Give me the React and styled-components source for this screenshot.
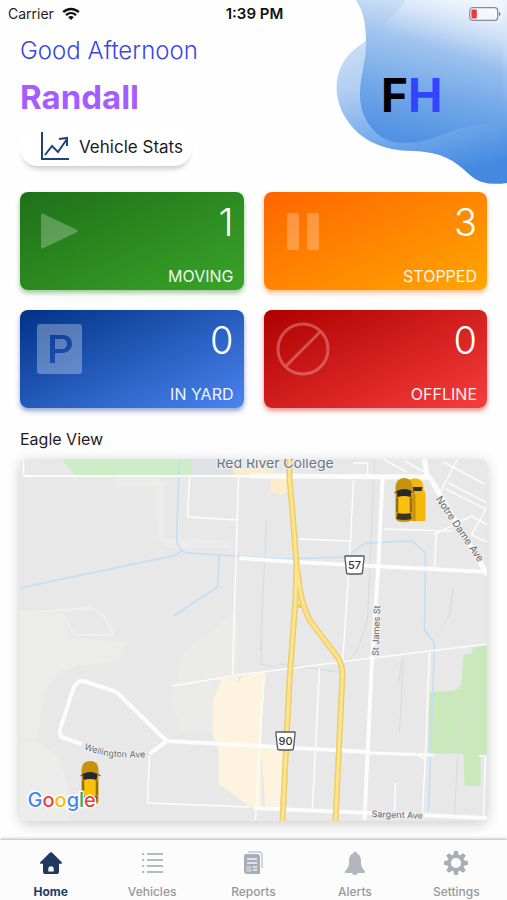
import React from "react";
import styled, { createGlobalStyle } from "styled-components";

const GlobalStyle = createGlobalStyle`
  *, *::before, *::after {
    box-sizing: border-box;
  }

  body {
    margin: 0;
    background-color: #fefefe;
    font-family: Inter, "Liberation Sans", sans-serif;
    color: #1c1c1e;
  }

  h1, h2, p {
    margin: 0;
    font-weight: 400;
  }
`;

const Screen = styled.div`
  position: relative;
  display: flex;
  flex-direction: column;
  min-height: 100vh;
  overflow: hidden;
`;

const StatusBar = styled.div`
  position: relative;
  z-index: 1;
  display: grid;
  grid-template-columns: 1fr auto 1fr;
  align-items: center;
  height: 28px;
  padding: 0 6px 0 8px;
  font-size: 14px;
  line-height: 20px;
`;

const Carrier = styled.span`
  display: flex;
  align-items: center;
  gap: 8px;
`;

const Clock = styled.time`
  font-size: 15px;
  font-weight: 600;
  color: #111;
`;

const Battery = styled.svg`
  justify-self: end;
`;

// Sits behind the header in the top right corner
const LogoArea = styled.div`
  position: absolute;
  top: 0;
  right: 0;
  width: 172px;
  height: 186px;
  padding: 66px 0 0 46px;

  svg {
    position: absolute;
    inset: 0;
  }
`;

const Logo = styled.div`
  position: relative;
  font-size: 46px;
  line-height: 58px;
  font-weight: 700;
  color: #000;

  span {
    color: #3344ff;
  }
`;

const Header = styled.header`
  position: relative;
  display: flex;
  flex-direction: column;
  align-items: flex-start;
  padding: 8px 20px 0;
`;

const Greeting = styled.p`
  font-size: 24px;
  line-height: 30px;
  font-weight: 300;
  color: #3a46e0;
`;

const UserName = styled.h1`
  margin-top: 11px;
  font-size: 33px;
  line-height: 40px;
  font-weight: 700;
  color: #a45eff;
`;

const StatsButton = styled.button`
  display: flex;
  align-items: center;
  gap: 8px;
  height: 38px;
  margin-top: 11px;
  padding: 0 9px 0 20px;
  border: 0;
  border-radius: 18px;
  background-color: #fff;
  box-shadow: 0 6px 5px -3px rgba(0, 0, 0, 0.2);
  font-family: inherit;
  font-size: 17px;
  color: #1c1c1e;
`;

const CardGrid = styled.section`
  display: grid;
  grid-template-columns: 1fr 1fr;
  gap: 20px;
  padding: 26px 20px 0;
`;

const Card = styled.article`
  display: grid;
  grid-template-columns: auto 1fr;
  grid-template-rows: 1fr auto;
  height: 98px;
  padding: 7px 10px 4px;
  border-radius: 8px;
  background: linear-gradient(155deg, ${(p) => p.$from}, ${(p) => p.$to});
  box-shadow: 0 3px 5px ${(p) => p.$shadow};
  color: #fff;

  svg {
    margin: 4px 0 0 1px;
  }
`;

const Count = styled.p`
  font-size: 38px;
  line-height: 46px;
  font-weight: 300;
  text-align: right;
`;

const CardLabel = styled.h2`
  grid-column: 1 / -1;
  font-size: 16px;
  line-height: 20px;
  text-align: right;
  opacity: 0.92;
`;

const MapSection = styled.section`
  flex: 1;
  display: flex;
  flex-direction: column;
  padding: 21px 20px 19px;
`;

const SectionTitle = styled.h2`
  margin-bottom: 10px;
  font-size: 16px;
  line-height: 20px;
`;

const MapFrame = styled.div`
  flex: 1;
  display: flex;
  min-height: 300px;
  border-radius: 5px;
  box-shadow: 0 3px 14px rgba(0, 0, 0, 0.2);
  overflow: hidden;

  svg {
    flex: 1;
    width: 100%;
  }
`;

const TabBar = styled.nav`
  position: relative;
  display: grid;
  grid-template-columns: repeat(5, 1fr);
  height: 60px;
  background-color: #fcfcfd;
  box-shadow: 0 -1px 3px rgba(0, 0, 0, 0.3);
`;

const Tab = styled.a`
  display: flex;
  flex-direction: column;
  align-items: center;
  gap: 9px;
  padding-top: 11px;
  font-size: 12px;
  line-height: 16px;
  font-weight: ${(p) => (p.$active ? 700 : 500)};
  color: ${(p) => (p.$active ? "#233a66" : "#97979b")};
  text-decoration: none;
`;

const WifiIcon = () => (
  <svg width="18" height="14" viewBox="0 0 18 14" fill="none" stroke="#111" strokeWidth="2.4" aria-hidden="true">
    <path d="M1.2 5.2C5.6 0.9 12.4 0.9 16.8 5.2" />
    <path d="M4 8.2C6.9 5.4 11.1 5.4 14 8.2" />
    <path d="M9 13L6.2 10.2C7.8 8.7 10.2 8.7 11.8 10.2Z" fill="#111" stroke="none" />
  </svg>
);

const BatteryIcon = () => (
  <Battery width="32" height="14" viewBox="0 0 32 14" role="img" aria-label="Battery low">
    <rect x="0.7" y="0.7" width="28" height="12.6" rx="3" fill="#ffffff" fillOpacity="0.5" stroke="#8b8b90" strokeWidth="1.2" />
    <rect x="2.4" y="2.4" width="5.4" height="9.2" rx="1" fill="#f23a35" />
    <path d="M30 5V9Q31.5 8.5 31.5 7Q31.5 5.5 30 5Z" fill="#77777c" />
  </Battery>
);

const Blob = () => (
  <svg width="172" height="186" viewBox="335 0 172 186" aria-hidden="true">
    <defs>
      <linearGradient id="blobBack" gradientUnits="userSpaceOnUse" x1="385" y1="10" x2="425" y2="180">
        <stop offset="0" stopColor="#d9e7f9" />
        <stop offset="0.4" stopColor="#b1cef3" />
        <stop offset="0.75" stopColor="#6fa6e9" />
        <stop offset="1" stopColor="#4489e1" />
      </linearGradient>
      <linearGradient id="blobFront" gradientUnits="userSpaceOnUse" x1="460" y1="0" x2="430" y2="144">
        <stop offset="0" stopColor="#dce9fa" />
        <stop offset="0.3" stopColor="#a6c7f0" />
        <stop offset="0.65" stopColor="#76aae9" />
        <stop offset="1" stopColor="#5092e3" />
      </linearGradient>
      <linearGradient id="blobShine" gradientUnits="userSpaceOnUse" x1="470" y1="60" x2="490" y2="0">
        <stop offset="0" stopColor="#fff" stopOpacity="0" />
        <stop offset="1" stopColor="#fff" stopOpacity="0.6" />
      </linearGradient>
    </defs>
    <path
      d="M406 0L507 0L507 183C492 185 480 184 470 175C455 161 443 152 413 151C383 151 360 140 347 120C331 96 333 66 356 48C375 36 390 15 406 0Z"
      fill="url(#blobBack)"
    />
    <path
      d="M356 0L507 0L503 10L503 126C487 123 470 125 455 130C436 137 420 144 400 143C378 142 360 120 360 95C360 74 367 61 366 38C365 21 364 13 356 0Z"
      fill="url(#blobFront)"
    />
    <path d="M406 0H507V100H366V41Q388 24 406 0Z" fill="url(#blobShine)" />
  </svg>
);

const StatsIcon = () => (
  <svg width="31" height="30" viewBox="0 0 31 30" fill="none" stroke="#1d437f" strokeWidth="2" aria-hidden="true">
    <path d="M2 0V27H29" />
    <path d="M5 23L12 14L18 20L27 7" />
    <path d="M19 7L27 6V14" />
  </svg>
);

const PlayIcon = () => (
  <svg width="56" height="56" viewBox="0 0 56 56" aria-hidden="true">
    <path d="M11.5 12V44L45 28Z" fill="#fff" stroke="#fff" strokeWidth="3" strokeLinejoin="round" opacity="0.25" />
  </svg>
);

const PauseIcon = () => (
  <svg width="56" height="56" viewBox="0 0 56 56" fill="#fff" opacity="0.25" aria-hidden="true">
    <rect x="12" y="10" width="12" height="37" rx="2" />
    <rect x="32" y="10" width="12" height="37" rx="2" />
  </svg>
);

const ParkingIcon = () => (
  <svg width="56" height="56" viewBox="0 0 56 56" opacity="0.3" aria-hidden="true">
    <path
      fillRule="evenodd"
      fill="#fff"
      d="M9 3H48Q51 3 51 6V50Q51 53 48 53H9Q6 53 6 50V6Q6 3 9 3ZM19 14V42H24V32H31C37 32 41 28 41 23C41 17 37 14 31 14ZM24 18H31C34 18 36 20 36 23C36 26 34 28 31 28H24Z"
    />
  </svg>
);

const BlockedIcon = () => (
  <svg width="56" height="56" viewBox="0 0 56 56" fill="none" stroke="#fff" strokeWidth="3" opacity="0.28" aria-hidden="true">
    <circle cx="28" cy="28" r="25" />
    <path d="M10.5 45.5L45.5 10.5" />
  </svg>
);

const HomeIcon = () => (
  <svg width="24" height="24" viewBox="0 0 24 24" fill="#20395d" aria-hidden="true">
    <path d="M12 1.2Q12.5 1.2 13 1.6L23 11.4Q23.4 12.6 22 12.8H20V21Q20 23 18 23H14.7V18Q14.7 15.2 12 15.2Q9.3 15.2 9.3 18V23H6Q4 23 4 21V12.8H2Q0.6 12.6 1 11.4L11 1.6Q11.5 1.2 12 1.2Z" />
    <path d="M9 20.5H15V23H9Z" />
  </svg>
);

const ListIcon = () => (
  <svg width="24" height="24" viewBox="0 0 24 24" stroke="#b5bac2" strokeWidth="1.8" aria-hidden="true">
    <path d="M2 3H4.2M7 3H23M2 9H4.2M7 9H23M2 15H4.2M7 15H23M2 21H4.2M7 21H23" />
  </svg>
);

const ReportIcon = () => (
  <svg width="24" height="24" viewBox="0 0 24 24" aria-hidden="true">
    <path d="M7 1H18Q21 1 21 4V17" fill="none" stroke="#c4c8cf" strokeWidth="1.5" />
    <path d="M5 3H16Q19 3 19 6V23H6Q3 23 3 20V5Q3 3 5 3Z" fill="#a8aeb9" />
    <path d="M6 8H16M6 12H16M6 16H10M12 16H16M12 19H16" stroke="#f1f2f4" strokeWidth="1.4" />
    <rect x="5.5" y="15" width="5" height="6" fill="#c5c9d0" />
  </svg>
);

const BellIcon = () => (
  <svg width="24" height="24" viewBox="0 0 24 24" fill="#b1b6bf" aria-hidden="true">
    <path d="M12 0.5Q13.5 0.5 13.7 2.2C17.2 3.6 18 7 18 10.5C18 15.5 19.5 18 22.2 20.4Q23 21.8 21 22H15Q14.5 24 12 24Q9.5 24 9 22H3Q1 21.8 1.8 20.4C4.5 18 6 15.5 6 10.5C6 7 6.8 3.6 10.3 2.2Q10.5 0.5 12 0.5Z" />
  </svg>
);

const GearIcon = () => (
  <svg width="26" height="24" viewBox="-13 -12 26 24" fill="#a9aeb8" aria-hidden="true">
    {[0, 45, 90, 135, 180, 225, 270, 315].map((angle) => (
      <path key={angle} d="M-2.9 -7L-1.8 -12H1.8L2.9 -7Z" transform={`rotate(${angle})`} />
    ))}
    <circle r="6.8" fill="none" stroke="#a9aeb8" strokeWidth="3.4" />
  </svg>
);

const Car = ({ x, y, truck }) => (
  <g transform={`translate(${x} ${y})`}>
    {truck && (
      <>
        <path d="M12 3Q18 -1 23 1Q28 3 28 11L30 15V43H12Z" fill="#f3b80c" />
        <path d="M17 9H27L26 13H18Z" fill="#2c2f35" />
        <path d="M17 16H20V43H17Z" fill="#c98f08" />
      </>
    )}
    <path d="M0 10Q0 0 9 0Q17 0 17 10V40Q17 44 9 44Q0 44 0 40Z" fill="#c7930d" />
    <path d="M-1 15L2 13M19 15L16 13" stroke="#8d6a16" strokeWidth="1.5" />
    <path d="M3 18H14V35H3Z" fill="#f8c20c" />
    <path d="M1 13Q9 9 16 13L15 19Q9 17 2 19Z" fill="#25282e" />
    <path d="M2 35Q9 37 15 35L16 41Q9 43 1 41Z" fill="#3a3528" />
    <path d="M1.5 20V34M15.5 20V34" stroke="#5f4a1b" />
  </g>
);

const Shield = ({ x, y, number }) => (
  <g transform={`translate(${x} ${y})`}>
    <path d="M-9 -9H9Q10 -9 9.5 -7L8 7Q8 9 6 9H-6Q-8 9 -8 7L-9.5 -7Q-10 -9 -9 -9Z" fill="#fff" stroke="#55585c" strokeWidth="1.3" />
    <text y="4" textAnchor="middle" fontSize="11" fontWeight="500" fill="#333">{number}</text>
  </g>
);

const StreetMap = () => (
  <svg viewBox="20 459 468 362" preserveAspectRatio="xMidYMid slice" role="img" aria-label="Map with vehicle positions">
    <defs>
      <path id="wellington" d="M84 749Q104 757 120 757Q136 758 156 757" />
    </defs>
    <rect x="-200" y="0" width="1000" height="1400" fill="#e8e8e8" />

    {/* terrain patches */}
    <g fill="#ececeb">
      <path d="M20 613L62 613L69 637L126 642L119 662L80 665L60 672L45 692L38 740L20 738Z" />
      <path d="M35 740L60 757L69 790L70 821H20V742Z" />
      <path d="M157 482H165V538L225 540L232 548H170Q158 545 158 530Z" />
      <path d="M115 478H160V487H118Z" />
      <path d="M172 700L185 652L238 610V675L222 680V730H182Z" opacity="0.7" />
    </g>
    <path d="M62 459H192V475H75Z" fill="#cdedc6" />
    <path d="M192 459H234V476H192Z" fill="#dfe1e5" />
    <path d="M234 468H254L262 466L278 472L289 476L292 487L283 496L270 491L272 478H234Z" fill="#fbedcb" />
    <path d="M222 679L264 672L262 745V808H253L233 794L219 783V747L213 735L214 700Z" fill="#fdf3df" />
    <path d="M262 748L287 750L284 810H266Z" fill="#fdf3df" />
    <path d="M464 655L473 653V648L488 645V755H481L481 786H465L464 754L429 753L430 692L452 691Q461 690 462 682Z" fill="#c9e8bb" />

    {/* minor lines */}
    <g fill="none" stroke="#d8dadb" strokeWidth="1">
      <path d="M267 520L261 650M375 459L368 620L358 650L340 672L280 664M454 588L450 615L440 630M262 640V664L280 668M402 660L399 684M404 658L400 732" />
      <path d="M488 690Q464 715 459 740L455 815" />
      <path d="M238 683Q240 674 250 674" />
    </g>
    <g fill="none" stroke="#bfdff5" strokeWidth="1.5">
      <path d="M180 459L177 538Q179 553 190 553L254 557L285 559L346 557L366 543L413 541L426 553L425 630L435 643L433 700L429 811" />
      <path d="M20 588L177 555L182 550" />
      <path d="M220 554L218 587L174 616" />
    </g>

    {/* streets */}
    <g fill="none" stroke="#fcfcfc" strokeLinejoin="round">
      <g strokeWidth="1.5">
        <path d="M24 459V475M190 477L188 517L239 520M354 480L350 560L343 664M300 539L352 541M384 529L454 531M437 531L435 568M430 653L426 753L423 813M320 668L313 808M265 674L260 745L256 820M173 686L238 675L430 651L488 644" />
        <path d="M239 477L233 674M150 755L148 803L250 807M396 783L395 811M354 463L368 463V478M384 459L407 472M405 461L425 472M458 459L441 492M485 484L444 462M488 503L449 483M446 489L488 510M486 510L472 535L488 542M434 535L472 516L488 525" />
        <path d="M418 755L425 759M479 756H486L484 815" />
      </g>
      <path d="M20 613L90 608Q106 612 114 635L75 635L62 613" strokeWidth="2" stroke="#f0f0ef" />
      <path d="M24 476L254 476" strokeWidth="2" />
      <path d="M370 753L434 755" strokeWidth="3" />
      <path d="M383 479L379 563L372 670L365 820" strokeWidth="4" />
      <path d="M250 476L430 477L488 575" strokeWidth="5" />
      <path d="M425 459L428 480" strokeWidth="5" />
      <path d="M240 558L296 562L488 572" strokeWidth="4" />
      <path d="M82 744L62 737Q59 733 62 725L74 688Q78 680 84 681L117 692L167 741L370 752M167 741L150 754" strokeWidth="4" />
      <path d="M254 808L488 818" strokeWidth="4" />
    </g>
    <g fill="none" strokeLinejoin="round">
      <g stroke="#edcd6b" strokeWidth="6">
        <path d="M290 459L290 480Q294 520 297 565L296 600L290 680L283 821" />
        <path d="M298 570Q300 600 310 620L335 653Q343 662 343 674L336 821" />
        <path d="M295 606H304" strokeWidth="4" />
      </g>
      <g stroke="#fde58e" strokeWidth="3">
        <path d="M290 459L290 480Q294 520 297 565L296 600L290 680L283 821" />
        <path d="M298 570Q300 600 310 620L335 653Q343 662 343 674L336 821" />
      </g>
    </g>
    <Shield x={355} y={565} number="57" />
    <Shield x={286} y={741} number="90" />

    {/* labels */}
    <g fill="#63676b" stroke="#f1f1f1" strokeWidth="2" paintOrder="stroke" strokeLinejoin="round" fontSize="10">
      <text x="217" y="468" fontSize="14" fill="#667884">Red River College</text>
      <text transform="translate(436 499) rotate(56)">Notre Dame Ave</text>
      <text transform="translate(379 656) rotate(-88)" fontSize="9">St James St</text>
      <text fontSize="9">
        <textPath href="#wellington">Wellington Ave</textPath>
      </text>
      <text transform="translate(372 817) rotate(2)" fontSize="9">Sargent Ave</text>
    </g>

    <Car x={396} y={478} truck />
    <Car x={82} y={761} />

    <text x="28" y="807" fontSize="20" fontWeight="500" stroke="#fff" strokeWidth="3" paintOrder="stroke" strokeLinejoin="round">
      <tspan fill="#4285f4">G</tspan>
      <tspan fill="#ea4335">o</tspan>
      <tspan fill="#fbbc05">o</tspan>
      <tspan fill="#4285f4">g</tspan>
      <tspan fill="#34a853">l</tspan>
      <tspan fill="#ea4335">e</tspan>
    </text>
  </svg>
);

const cards = [
  { label: "MOVING", count: 1, icon: PlayIcon, from: "#1f7018", to: "#38a428", shadow: "rgba(40, 130, 30, 0.45)" },
  { label: "STOPPED", count: 3, icon: PauseIcon, from: "#ff6500", to: "#ffa600", shadow: "rgba(255, 110, 0, 0.45)" },
  { label: "IN YARD", count: 0, icon: ParkingIcon, from: "#003286", to: "#4a84f0", shadow: "rgba(20, 60, 150, 0.45)" },
  { label: "OFFLINE", count: 0, icon: BlockedIcon, from: "#ae0000", to: "#f83d3d", shadow: "rgba(190, 20, 20, 0.45)" },
];

const tabs = [
  { label: "Home", icon: HomeIcon, active: true },
  { label: "Vehicles", icon: ListIcon },
  { label: "Reports", icon: ReportIcon },
  { label: "Alerts", icon: BellIcon },
  { label: "Settings", icon: GearIcon },
];

const App = () => {
  return (
    <>
      <GlobalStyle />
      <Screen>
        <LogoArea>
          <Blob />
          <Logo>
            F<span>H</span>
          </Logo>
        </LogoArea>

        <StatusBar>
          <Carrier>
            Carrier
            <WifiIcon />
          </Carrier>
          <Clock>1:39 PM</Clock>
          <BatteryIcon />
        </StatusBar>

        <Header>
          <Greeting>Good Afternoon</Greeting>
          <UserName>Randall</UserName>
          <StatsButton type="button">
            <StatsIcon />
            Vehicle Stats
          </StatsButton>
        </Header>

        <CardGrid>
          {cards.map(({ label, count, icon: Icon, from, to, shadow }) => (
            <Card key={label} $from={from} $to={to} $shadow={shadow}>
              <Icon />
              <Count>{count}</Count>
              <CardLabel>{label}</CardLabel>
            </Card>
          ))}
        </CardGrid>

        <MapSection>
          <SectionTitle>Eagle View</SectionTitle>
          <MapFrame>
            <StreetMap />
          </MapFrame>
        </MapSection>

        <TabBar>
          {tabs.map(({ label, icon: Icon, active }) => (
            <Tab key={label} href={`#${label.toLowerCase()}`} $active={active} aria-current={active ? "page" : undefined}>
              <Icon />
              {label}
            </Tab>
          ))}
        </TabBar>
      </Screen>
    </>
  );
};

export default App;
